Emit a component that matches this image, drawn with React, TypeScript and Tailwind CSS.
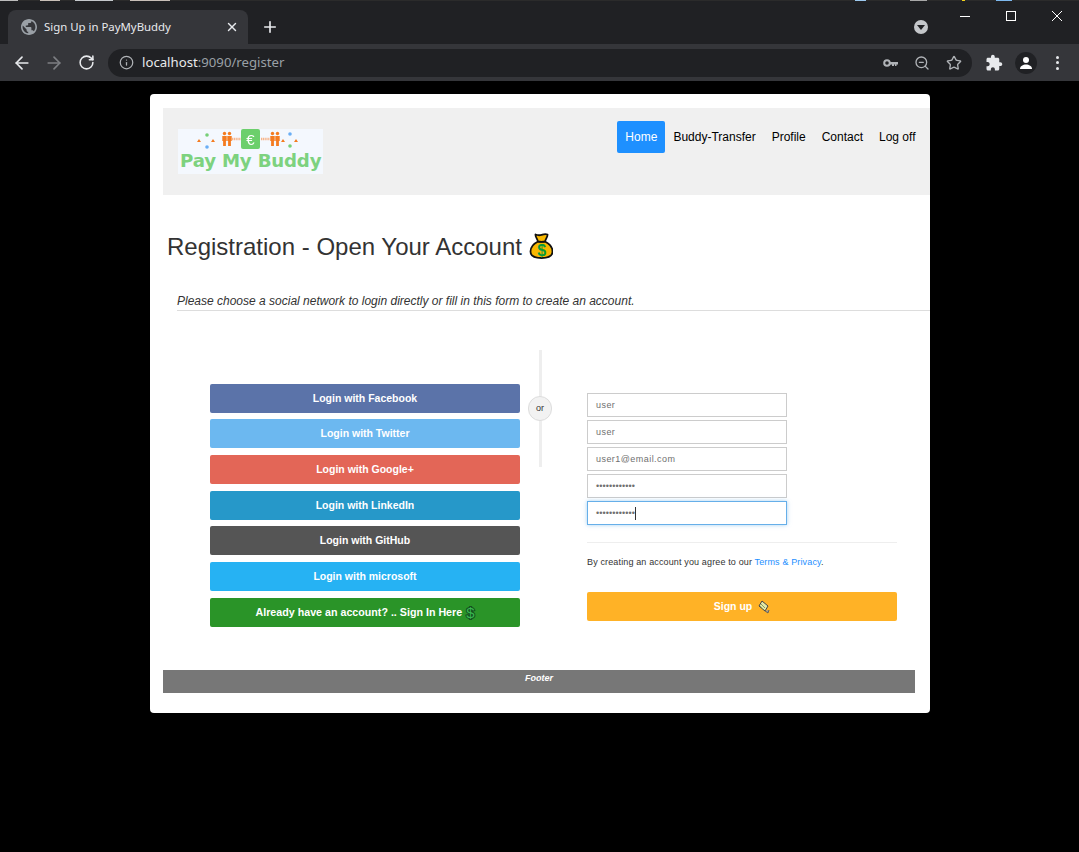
import React from "react";
import { ArrowLeft, ArrowRight, RotateCw, Info, ZoomOut, Star, X, Plus } from "lucide-react";

const buttons = [
  ["Login with Facebook", "bg-[#5b73a9] mt-0"],
  ["Login with Twitter", "bg-[#6cb8f0] mt-[6px]"],
  ["Login with Google+", "bg-[#e36657] mt-[7px]"],
  ["Login with LinkedIn", "bg-[#2698c9] mt-[7px]"],
  ["Login with GitHub", "bg-[#555555] mt-[6px]"],
  ["Login with microsoft", "bg-[#26b2f3] mt-[7px]"],
];

const strip = [
  ["w-[18px] ml-0 bg-[#bdbdbd]"],
  ["w-[20px] ml-[22px] bg-[#c9c0b8]"],
  ["w-[38px] ml-[15px] bg-[#c4c8cc]"],
  ["w-[40px] ml-[17px] bg-[#c8bfb8]"],
  ["w-[11px] ml-[685px] bg-[#9cc8ee]"],
  ["w-[17px] ml-[44px] bg-[#a8a8a8]"],
  ["w-[3px] ml-[35px] bg-[#f2d21c]"],
  ["w-[16px] ml-[31px] bg-[#7db8ee]"],
];

function Person({ x }: { x: number }) {
  return (
    <g fill="#f47b20">
      <circle cx={x} cy={4.5} r={1.7} />
      <path d={`M${x - 2.2} 7h4.400v5h-.8v5h-2.800v-5h-.8z`} />
    </g>
  );
}

function Logo() {
  return (
    <div className="w-[145px] h-[45px] bg-[#f4f8fe] flex flex-col overflow-hidden">
      <svg width="145" height="23" viewBox="0 0 145 23" className="shrink-0 blur-[0.25px]">
        <path d="M21 10l2 3h-4zM35 10l2 3h-4z" fill="#f47b20" />
        <circle cx="29" cy="6" r="1.800" fill="#77cf78" />
        <circle cx="29" cy="18" r="1.800" fill="#6aaef5" />
        <Person x={46.500} /><Person x={51.500} />
        <path d="M54 10h9" stroke="#f7b48a" strokeWidth="2.400" strokeDasharray="1.2 .6" />
        <rect x="63" y="0" width="19" height="20" rx="2" fill="#6ccf6c" />
        <text x="72.500" y="15.500" textAnchor="middle" fontSize="15" fill="#fff" fontFamily="Liberation Sans">€</text>
        <path d="M83 10h9" stroke="#f7b48a" strokeWidth="2.400" strokeDasharray="1.2 .6" />
        <Person x={94.500} /><Person x={99.500} />
        <path d="M105 10l2 3h-4zM118 10l2 3h-4z" fill="#f47b20" />
        <circle cx="112" cy="5" r="1.800" fill="#6aaef5" />
        <circle cx="112" cy="17" r="1.800" fill="#77cf78" />
      </svg>
      <div className="ml-[2px] font-['DejaVu_Sans'] font-bold text-[18.200px] leading-[20px] text-[#7dd27f] tracking-[-0.2px] whitespace-nowrap -mt-[1px]">Pay My Buddy</div>
    </div>
  );
}

function MoneyBag() {
  return (
    <svg width="24" height="28" viewBox="0 0 24 28" className="inline-block">
      <path d="M9 8.500C4 11 1.500 15 1.500 18.500c0 4.700 4.500 6.500 11 6.500s11-1.800 11-6.500c0-3.500-2.500-7.500-7.500-10z" fill="#f9b800" stroke="#111" strokeWidth="1.800" />
      <path d="M6.500 1.500c2.500 1 4 1 6 .4s3.500-1.400 6-.4c.4 2-2 4.500-2.500 7-2.500.6-4.500.6-7 0C8.500 6 6.100 3.500 6.500 1.500z" fill="#f9b800" stroke="#111" strokeWidth="1.800" strokeLinejoin="round" />
      <text x="12.700" y="23" textAnchor="middle" fontSize="16" fontWeight="700" fill="#0a9a3a" fontFamily="Liberation Sans">$</text>
    </svg>
  );
}

export default function App() {
  return (
    <div className="w-[1079px] h-[852px] bg-black overflow-hidden font-['Liberation_Sans',sans-serif]">
      {/* desktop peeking through on the top row */}
      <div className="h-px bg-[#2b2b2b] flex">
        {strip.map(([cls], i) => <div key={i} className={`h-px ${cls}`} />)}
      </div>
      {/* title strip */}
      <div className="h-[43px] bg-[#202124] flex items-end relative">
        <div className="ml-[8px] w-[240px] h-[34px] bg-[#35363a] rounded-t-[8px] flex items-center pl-[13px] pr-[9px] font-['Noto_Sans',sans-serif]">
          <svg width="16" height="16" viewBox="2 2 20 20" fill="#9aa0a6" className="shrink-0"><path d="M12 2C6.480 2 2 6.480 2 12s4.480 10 10 10 10-4.480 10-10S17.520 2 12 2zm-1 17.930c-3.950-.49-7-3.850-7-7.930 0-.62.08-1.210.21-1.790L9 15v1c0 1.100.9 2 2 2v1.930zm6.900-2.540c-.26-.81-1-1.390-1.900-1.390h-1v-3c0-.55-.45-1-1-1H8v-2h2c.55 0 1-.45 1-1V7h2c1.100 0 2-.9 2-2v-.41c2.930 1.190 5 4.060 5 7.410 0 2.080-.8 3.970-2.100 5.390z" /></svg>
          <span className="ml-[7px] text-[11.400px] text-[#e8eaed] whitespace-nowrap flex-1">Sign Up in PayMyBuddy</span>
          <X size={14} strokeWidth={2.4} className="text-[#e8eaed]" />
        </div>
        <Plus size={18} strokeWidth={2.2} className="text-[#e8eaed] ml-[13px] mb-[8px]" />
        <div className="absolute left-[914px] top-[19px] w-[14px] h-[14px] rounded-full bg-[#c4c7ca] flex items-center justify-center">
          <div className="w-0 h-0 border-l-[4px] border-r-[4px] border-t-[5px] border-l-transparent border-r-transparent border-t-[#202124]" />
        </div>
        <div className="absolute left-[960px] top-[15px] w-[10px] h-px bg-white" />
        <div className="absolute left-[1006px] top-[10px] w-[10px] h-[10px] border border-white" />
        <svg width="12" height="12" viewBox="0 0 12 12" className="absolute left-[1051px] top-[9px]"><path d="M1 1l10 10M11 1L1 11" stroke="#fff" strokeWidth="1" /></svg>
      </div>
      {/* toolbar */}
      <div className="h-[37px] bg-[#35363a] flex items-center relative">
        <ArrowLeft size={20} strokeWidth={2} className="ml-[12px] text-[#e8eaed]" />
        <ArrowRight size={20} strokeWidth={2} className="ml-[12px] text-[#7d7f83]" />
        <RotateCw size={17} strokeWidth={2.2} className="ml-[14px] text-[#e8eaed]" />
        <div className="ml-[13px] w-[864px] h-[28px] rounded-full bg-[#202124] flex items-center pl-[11px] font-['Noto_Sans',sans-serif]">
          <Info size={15} className="text-[#b0b3b7]" />
          <span className="ml-[8px] text-[13.200px] text-[#e8eaed] whitespace-nowrap">localhost<span className="text-[#9aa0a6]">:9090/register</span></span>
          <div className="flex-1" />
          <svg width="16" height="16" viewBox="0 0 16 16" className="mr-[15px]"><circle cx="4" cy="8" r="2.800" fill="none" stroke="#b0b3b7" strokeWidth="2" /><path d="M7 7h8v2.500h-1.500v1.500H12V9.500h-1V11H9V9.500H7z" fill="#b0b3b7" /></svg>
          <ZoomOut size={16} className="mr-[16px] text-[#b0b3b7]" />
          <Star size={16} className="mr-[10px] text-[#b0b3b7]" />
        </div>
        <svg width="18" height="18" viewBox="0 0 24 24" fill="#e8eaed" className="ml-[13px]"><path d="M20.500 11H19V7c0-1.100-.9-2-2-2h-4V3.500C13 2.120 11.880 1 10.500 1S8 2.120 8 3.500V5H4c-1.100 0-1.990.9-1.990 2v3.800H3.500c1.490 0 2.700 1.210 2.700 2.700s-1.210 2.700-2.700 2.700H2V20c0 1.100.9 2 2 2h3.800v-1.500c0-1.490 1.210-2.700 2.700-2.700 1.490 0 2.700 1.210 2.700 2.700V22H17c1.100 0 2-.9 2-2v-4h1.500c1.380 0 2.500-1.120 2.500-2.500S21.880 11 20.500 11z" /></svg>
        <div className="ml-[12px] w-[22px] h-[22px] rounded-full bg-[#202124] flex items-center justify-center">
          <svg width="14" height="14" viewBox="0 0 14 14" fill="#fff"><circle cx="7" cy="4" r="3" /><path d="M1 13c0-3 3-4.500 6-4.500s6 1.500 6 4.500z" /></svg>
        </div>
        <div className="ml-[19px] flex flex-col gap-[2.500px]">
          <div className="w-[3px] h-[3px] rounded-full bg-[#e8eaed]" />
          <div className="w-[3px] h-[3px] rounded-full bg-[#e8eaed]" />
          <div className="w-[3px] h-[3px] rounded-full bg-[#e8eaed]" />
        </div>
      </div>
      {/* card */}
      <div className="ml-[150px] mt-[13px] w-[780px] h-[619px] bg-white rounded-[4px] pt-[14px] pl-[13px]">
        <div className="h-[87px] bg-[#f0f0f0] flex items-start justify-between">
          <div className="ml-[15px] mt-[21px]"><Logo /></div>
          <nav className="mt-[13px] mr-[6.500px] flex text-[12px] text-black">
            <a className="w-[48px] text-center h-[32px] leading-[32px] bg-[#1e90ff] text-white rounded-[2px]">Home</a>
            <a className="px-[8px] h-[32px] leading-[32px]">Buddy-Transfer</a>
            <a className="px-[8px] h-[32px] leading-[32px]">Profile</a>
            <a className="px-[8px] h-[32px] leading-[32px]">Contact</a>
            <a className="px-[8px] h-[32px] leading-[32px]">Log off</a>
          </nav>
        </div>
        <h1 className="mt-[36px] ml-[4px] text-[24px] leading-[32px] text-[#333333] flex items-center gap-[7px]">Registration - Open Your Account <MoneyBag /></h1>
        <p className="mt-[31px] ml-[14px] pb-[2px] border-b border-[#dddddd] text-[12px] leading-[14px] italic text-[#333333]">Please choose a social network to login directly or fill in this form to create an account.</p>
        <div className="flex">
          <div className="ml-[47px] w-[310px] pt-[73px] flex flex-col">
            {buttons.map(([label, cls]) => (
              <div key={label} className={`h-[29px] rounded-[2px] ${cls} text-white text-[10.500px] font-bold flex items-center justify-center`}>{label}</div>
            ))}
            <div className="mt-[7px] h-[29px] rounded-[2px] bg-[#2a9428] text-white text-[10.700px] font-bold flex items-center justify-center">Already have an account? .. Sign In Here <span className="ml-[4px] text-[#38b850] text-[15px] font-normal leading-none [-webkit-text-stroke:2px_#14501f] [paint-order:stroke]">$</span></div>
          </div>
          <div className="w-[67px] relative">
            <div className="absolute left-[19px] top-[39px] w-[3px] h-[117px] bg-[#eeeeee]" />
            <div className="absolute left-[8px] top-[85px] w-[24px] h-[25px] rounded-full bg-[#f2f2f2] border border-[#dddddd] text-[9px] text-[#333] flex items-center justify-center">or</div>
          </div>
          <div className="w-[310px] pt-[82px]">
            <div className="flex flex-col gap-[3px] w-[200px]">
              {["user", "user", "user1@email.com"].map((v, i) => (
                <div key={i} className="h-[24px] border border-[#cccccc] bg-white pl-[8px] pt-[1px] flex items-center text-[9px] font-['Liberation_Sans'] text-[#6f6f6f] tracking-[0.45px]">{v}</div>
              ))}
              <div className="h-[24px] border border-[#cccccc] bg-white pl-[8px] pt-[1px] flex items-center text-[9px] text-[#6f6f6f] tracking-[0.1px]">••••••••••••</div>
              <div className="h-[24px] border border-[#66afe9] shadow-[0_0_4px_rgba(102,175,233,0.6)] bg-white pl-[8px] pt-[1px] flex items-center text-[9px] text-[#6f6f6f] tracking-[0.1px]">••••••••••••<span className="w-px h-[13px] bg-[#333]" /></div>
            </div>
            <div className="mt-[17px] border-t border-[#eeeeee]" />
            <p className="mt-[13px] text-[9px] leading-[12px] text-[#333] tracking-[0.14px]">By creating an account you agree to our <span className="text-[#1e90ff]">Terms &amp; Privacy</span>.</p>
            <div className="mt-[24px] h-[29px] rounded-[2px] bg-[#ffb226] text-white text-[10.500px] font-bold flex items-center justify-center">Sign up
              <svg width="14" height="14" viewBox="0 0 14 14" className="ml-[4px]"><path d="M6 1l6 5-3 5-6-5z" fill="#e3e8a8" stroke="#444" strokeWidth="1" /><path d="M5 4l4 4M4 6l3 3" stroke="#8a9a60" strokeWidth="1" /><path d="M9 11l3 2 1-3" fill="#999" stroke="#555" strokeWidth=".8" /></svg>
            </div>
          </div>
        </div>
        <div className="mt-[43px] w-[752px] h-[23px] bg-[#777777] text-center text-white text-[9px] font-bold italic leading-[16px]">Footer</div>
      </div>
    </div>
  );
}
